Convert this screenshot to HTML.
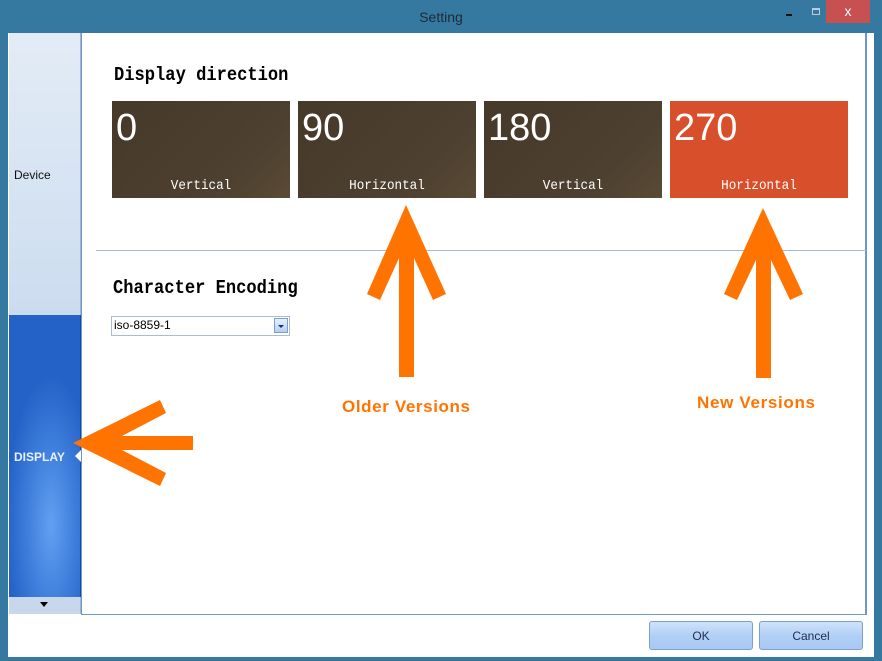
<!DOCTYPE html>
<html><head><style>
*{margin:0;padding:0;box-sizing:border-box}
body{width:882px;height:661px;background:#3679a0;position:relative;overflow:hidden;font-family:"Liberation Sans",sans-serif}
.abs{position:absolute}
.title{left:0;top:9px;width:882px;text-align:center;font-size:14px;color:#1e2a33}
.close{left:826px;top:0;width:44px;height:23px;background:#c75050;color:#fff;font-size:14px;text-align:center;line-height:23px}
.inner{left:8px;top:33px;width:866px;height:624px;background:#fff}
.dev{left:9px;top:33px;width:72px;height:282px;background:linear-gradient(#e3ecf6,#ccdcef);border-right:1px solid #9fb6d2}
.disp{left:9px;top:315px;width:72px;height:282px;background:radial-gradient(ellipse 45px 150px at 42px 210px,#62a0f2,#3a7ad8 60%,#2462c8);border-right:1px solid #1a4aa0}
.strip{left:9px;top:597px;width:72px;height:17px;background:#c7d8ec;border-right:1px solid #9fb6d2}
.content{left:81px;top:33px;width:786px;height:582px;border:1px solid #6f96c8;border-top:none;border-right:2px solid #6f96c8;background:#fff}
.h{font-family:"Liberation Mono",monospace;font-weight:bold;font-size:19px;color:#000;transform:scaleX(.9);transform-origin:left}
.tile{top:101px;width:178px;height:97px;background:linear-gradient(135deg,#46392a,#4d4030 70%,#5a4a35)}
.tile .n{position:absolute;left:4px;top:6px;font-size:38px;color:#fff}
.tile .l{position:absolute;left:0;width:100%;top:77px;text-align:center;font-family:"Liberation Mono",monospace;font-size:14px;color:#fff;transform:scaleX(.9)}
.btn{top:621px;width:104px;height:29px;border:1px solid #7d9fcc;border-radius:3px;background:linear-gradient(#cfe2fa,#b2d0f6 50%,#a8c9f4);text-align:center;line-height:28px;font-size:12px;color:#203050}
</style></head><body>
<div class="abs title">Setting</div>
<div class="abs" style="left:786px;top:14px;width:6px;height:2px;background:#111"></div>
<div class="abs" style="left:812px;top:8px;width:8px;height:7px;border:1px solid #bcd;border-top-width:2px"></div>
<div class="abs close">x</div>
<div class="abs inner"></div>
<div class="abs dev"></div>
<div class="abs" style="left:14px;top:168px;font-size:12px;color:#111">Device</div>
<div class="abs disp"></div>
<div class="abs" style="left:14px;top:450px;font-size:12px;font-weight:bold;color:#e8f0ff">DISPLAY</div>
<div class="abs" style="left:75px;top:449px;width:0;height:0;border-top:7px solid transparent;border-bottom:7px solid transparent;border-right:7px solid #fff"></div>
<div class="abs strip"></div>
<div class="abs" style="left:40px;top:602px;border-left:4px solid transparent;border-right:4px solid transparent;border-top:5px solid #000"></div>
<div class="abs content"></div>
<div class="abs h" style="left:114px;top:64px">Display direction</div>
<div class="abs tile" style="left:112px"><div class="n">0</div><div class="l">Vertical</div></div>
<div class="abs tile" style="left:298px"><div class="n">90</div><div class="l">Horizontal</div></div>
<div class="abs tile" style="left:484px"><div class="n">180</div><div class="l">Vertical</div></div>
<div class="abs tile" style="left:670px;background:#d84f2c"><div class="n">270</div><div class="l">Horizontal</div></div>
<div class="abs" style="left:96px;top:250px;width:770px;height:1px;background:#a5b9d2"></div>
<div class="abs h" style="left:113px;top:277px">Character Encoding</div>
<div class="abs" style="left:111px;top:316px;width:179px;height:20px;border:1px solid #a8bcd6;background:#fff;font-size:12px;line-height:17px;padding-left:2px">iso-8859-1</div>
<div class="abs" style="left:274px;top:318px;width:14px;height:15px;border:1px solid #7d9fcc;background:linear-gradient(#e6f0fc,#b5cff2)"></div>
<div class="abs" style="left:278px;top:325px;border-left:3px solid transparent;border-right:3px solid transparent;border-top:3px solid #1a2f60"></div>
<div class="abs btn" style="left:649px">OK</div>
<div class="abs btn" style="left:759px">Cancel</div>
<svg class="abs" style="left:0;top:0" width="882" height="661">
<g fill="#ff7400">
<polygon points="406,205 446,294 433,300 414,258 414,377 399,377 399,258 380,300 367,294"/>
<polygon points="763,208 803,294 790,300 771,260 771,378 756,378 756,260 737,300 724,294"/>
<polygon points="73,443 160,400 166,413 122,436 193,436 193,450 122,450 166,473 160,486"/>
</g>
<text x="406" y="412" text-anchor="middle" font-family="Liberation Sans" font-weight="bold" font-size="17" fill="#ff7400" textLength="128">Older Versions</text>
<text x="756" y="408" text-anchor="middle" font-family="Liberation Sans" font-weight="bold" font-size="17" fill="#ff7400" textLength="118">New Versions</text>
</svg>
</body></html>
